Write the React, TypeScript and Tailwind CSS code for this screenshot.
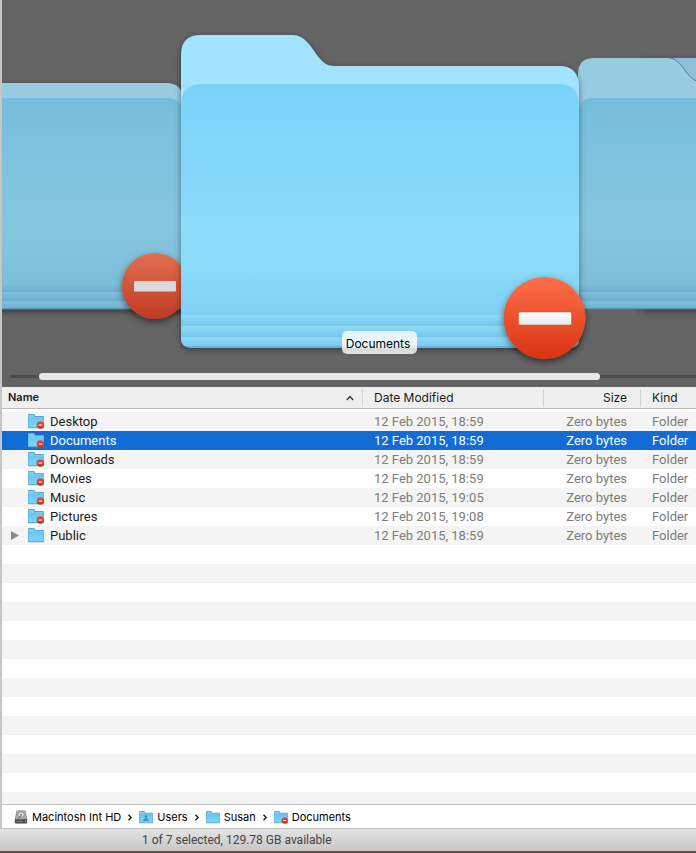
import { useState } from "react";

const files = [
  { name: "Desktop", date: "12 Feb 2015, 18:59", locked: true },
  { name: "Documents", date: "12 Feb 2015, 18:59", locked: true },
  { name: "Downloads", date: "12 Feb 2015, 18:59", locked: true },
  { name: "Movies", date: "12 Feb 2015, 18:59", locked: true },
  { name: "Music", date: "12 Feb 2015, 19:05", locked: true },
  { name: "Pictures", date: "12 Feb 2015, 19:08", locked: true },
  { name: "Public", date: "12 Feb 2015, 18:59", locked: false },
];

function FolderIcon({ locked = false, person = false, small = false }: { locked?: boolean; person?: boolean; small?: boolean }) {
  return (
    <svg viewBox="0 0 16 15" className={small ? "h-[13px] w-3.5 shrink-0" : "h-[15px] w-4 shrink-0"} aria-hidden="true">
      <path d="M0 1Q0 0 1 0H5.6Q6.4 0 6.7 .8L7.200 2H15.2Q16 2 16 2.8V13.6Q16 14.200 15.4 14.200H.6Q0 14.200 0 13.6Z" fill="#58a6cf" />
      <path d="M.6 1H5.8L6.6 3H15.4V4H.6Z" fill="#86cbec" />
      <path d="M.5 3.8H15.5V13.200H.5Z" fill="url(#miniFront)" />
      {person && (
        <path d="M8 4.6a1.7 1.9 0 0 1 .9 3.5v.7q2.6.5 2.8 2.6H4.3q.2-2.1 2.8-2.6v-.7A1.7 1.9 0 0 1 8 4.6Z" fill="#3c94c4" />
      )}
      {locked && (
        <>
          <circle cx="12.4" cy="11" r="3.7" fill="url(#badgeSmall)" />
          <rect x="10.6" y="10.5" width="3.6" height="1.1" fill="#fff" />
        </>
      )}
    </svg>
  );
}

function DriveIcon() {
  return (
    <svg viewBox="0 0 14 14" className="size-[14px] shrink-0" aria-hidden="true">
      <path d="M2.6.6H11.4L13.2 9.4V12.6Q13.2 13.4 12.4 13.4H1.6Q.8 13.4 .8 12.6V9.4Z" fill="#7d7d7d" />
      <path d="M3 1H11L12.4 9H1.6Z" fill="#a9a9a9" />
      <ellipse cx="7" cy="4.6" rx="3.2" ry="2.8" fill="#dedede" stroke="#777" strokeWidth=".6" />
      <circle cx="7" cy="4.6" r=".9" fill="#777" />
      <path d="M7.4 5.4 4.4 8.6" stroke="#555" strokeWidth=".9" />
      <rect x="1" y="9.4" width="12" height="3.8" rx=".6" fill="#4a4a4a" />
      <path d="M2.4 11.4H9" stroke="#8b8b8b" strokeWidth=".9" />
      <circle cx="11.4" cy="11.4" r=".6" fill="#d5d5d5" />
    </svg>
  );
}

function CoverFlow() {
  return (
    <svg viewBox="2 0 694 366" preserveAspectRatio="xMidYMid slice" className="block w-full" role="img" aria-label="Documents folder preview">
      <defs>
        <linearGradient id="front" x1="0" y1="0" x2="0" y2="1">
          <stop offset="0" stopColor="#79d2f8" />
          <stop offset=".6" stopColor="#8bdbfa" />
          <stop offset=".8" stopColor="#8bdafa" />
          <stop offset="1" stopColor="#80d0f2" />
        </linearGradient>
        <linearGradient id="frontDim" x1="0" y1="0" x2="0" y2="1">
          <stop offset="0" stopColor="#76bedb" />
          <stop offset=".6" stopColor="#86c6df" />
          <stop offset="1" stopColor="#79b9d4" />
        </linearGradient>
        <linearGradient id="band" x1="0" y1="0" x2="0" y2="1">
          <stop offset="0" stopColor="#8fd9f6" />
          <stop offset="1" stopColor="#74c8ed" />
        </linearGradient>
        <linearGradient id="bandDim" x1="0" y1="0" x2="0" y2="1">
          <stop offset="0" stopColor="#84bfd8" />
          <stop offset="1" stopColor="#69afcf" />
        </linearGradient>
        <linearGradient id="miniFront" x1="0" y1="0" x2="0" y2="1">
          <stop offset="0" stopColor="#67c5f3" />
          <stop offset="1" stopColor="#82d4f8" />
        </linearGradient>
        <linearGradient id="badgeRed" x1="0" y1="0" x2="0" y2="1">
          <stop offset="0" stopColor="#ff7048" />
          <stop offset="1" stopColor="#d93414" />
        </linearGradient>
        <linearGradient id="badgeSmall" x1="0" y1="0" x2="0" y2="1">
          <stop offset="0" stopColor="#ee4a30" />
          <stop offset="1" stopColor="#cf2c14" />
        </linearGradient>
        <linearGradient id="badgeDim" x1="0" y1="0" x2="0" y2="1">
          <stop offset="0" stopColor="#e27050" />
          <stop offset="1" stopColor="#c13a22" />
        </linearGradient>
        <linearGradient id="bar" x1="0" y1="0" x2="0" y2="1">
          <stop offset="0" stopColor="#fff" />
          <stop offset="1" stopColor="#e6e8ea" />
        </linearGradient>
        <filter id="shadow" x="-10%" y="-10%" width="120%" height="120%">
          <feDropShadow dx="0" dy="2" stdDeviation="3" floodColor="#000" floodOpacity=".45" />
        </filter>
        <filter id="badgeShadow" x="-20%" y="-20%" width="140%" height="150%">
          <feDropShadow dx="0" dy="3" stdDeviation="3.5" floodColor="#000" floodOpacity=".5" />
        </filter>
        <clipPath id="mainFront">
          <path d="M181 104Q182 84 202 84H559Q578 84 579 104V339Q579 347.500 570 347.500H191Q181 347.500 181 338Z" />
        </clipPath>
      </defs>

      {/* previous folder */}
      <g filter="url(#shadow)">
        <path d="M-20 83H168Q181 84 184 98V309H-20Z" fill="#98cbe1" />
        <path d="M-20 98H168Q181 99 184 112V309H-20Z" fill="url(#frontDim)" />
        <rect x="-20" y="283" width="204" height="9" fill="url(#bandDim)" />
        <rect x="-20" y="292" width="204" height="9" fill="url(#bandDim)" />
        <rect x="-20" y="301" width="204" height="8" fill="url(#bandDim)" />
        <rect x="-20" y="308.500" width="204" height="1" fill="#477e98" />
      </g>
      <circle cx="155" cy="286" r="33" fill="url(#badgeDim)" filter="url(#badgeShadow)" />
      <rect x="134" y="281" width="42" height="10.500" rx="1" fill="#d8dadc" />

      {/* next folders */}
      <path d="M640 58H720V309H640Z" fill="#8fc0d6" filter="url(#shadow)" />
      <g>
        <path d="M578 74Q578 58 594 58H669C683 58 686 82 702 82H720V309H578Z" fill="#98cbe1" />
        <path d="M578 113Q579 98 594 98H720V309H578Z" fill="url(#frontDim)" />
        <rect x="578" y="283" width="142" height="9" fill="url(#bandDim)" />
        <rect x="578" y="292" width="142" height="9" fill="url(#bandDim)" />
        <rect x="578" y="301" width="142" height="8" fill="url(#bandDim)" />
        <rect x="578" y="308.500" width="142" height="1" fill="#477e98" />
      </g>
      <path d="M669 58C683 58 686 82 702 82" fill="none" stroke="#557f93" strokeWidth="1" />

      {/* selected folder */}
      <path
        d="M181 55Q181 35 201 35H292C313 35 315 66 334 66H559Q579 66 579 87V339Q579 347.500 570 347.500H191Q181 347.500 181 338Z"
        fill="#a2e3ff"
        filter="url(#shadow)"
      />
      <g clipPath="url(#mainFront)">
        <rect x="181" y="84" width="398" height="231" fill="url(#front)" />
        <rect x="181" y="315" width="398" height="11" fill="url(#band)" />
        <rect x="181" y="326" width="398" height="11" fill="url(#band)" />
        <rect x="181" y="337" width="398" height="11" fill="url(#band)" />
        <rect x="181" y="346.500" width="398" height="1" fill="#4b9cc3" />
      </g>
      <circle cx="544.500" cy="318" r="41" fill="url(#badgeRed)" filter="url(#badgeShadow)" />
      <rect x="518.500" y="312" width="53" height="13" rx="1.500" fill="url(#bar)" stroke="#d94a2a" strokeWidth=".5" />

      <rect x="342" y="331" width="75" height="23" rx="5" fill="#fff" fillOpacity=".8" />
      <text x="378" y="348" textAnchor="middle" className="fill-black text-[12px]">Documents</text>
    </svg>
  );
}

const head = "relative h-[22px] border-b border-[#bdbdbd] p-0 font-normal";
const divider = <span className="absolute left-0 top-0.5 h-[18px] w-px bg-[#d2d2d2]" />;

export default function App() {
  const [selected, setSelected] = useState("Documents");

  return (
    <main className="flex h-screen flex-col overflow-hidden font-['Inter','Liberation_Sans',sans-serif] text-[12px] text-[#1c1c1c]">
      <div className="flex min-h-0 flex-1 flex-col border-l-2 border-[#c6c6c6] bg-white">
        <section className="shrink-0 bg-[#646464]">
          <CoverFlow />
          <div className="flex h-[21px] items-center pl-2">
            <input
              type="range"
              aria-label="Scroll folders"
              defaultValue={23}
              className="h-[7px] w-full appearance-none bg-[linear-gradient(#4d4d4d,#4d4d4d)] bg-[length:100%_3px] bg-center bg-no-repeat [&::-webkit-slider-thumb]:h-[7px] [&::-webkit-slider-thumb]:w-[561px] [&::-webkit-slider-thumb]:appearance-none [&::-webkit-slider-thumb]:rounded-full [&::-webkit-slider-thumb]:bg-[#e8e8e8]"
            />
          </div>
        </section>

        <table className="w-full shrink-0 table-fixed border-separate border-spacing-0">
          <colgroup>
            <col />
            <col className="w-[181px]" />
            <col className="w-[97px]" />
            <col className="w-[56px]" />
          </colgroup>
          <thead className="bg-[#efefef]">
            <tr>
              <th className={`${head} text-left`}>
                <button className="flex w-full items-center justify-between pl-1.5 pr-2">
                  <span className="text-[11px] font-semibold">Name</span>
                  <svg viewBox="0 0 8 6" className="h-1.5 w-2" aria-hidden="true">
                    <path d="M.8 5 4 1.500 7.200 5" fill="none" stroke="#333" strokeWidth="1.300" />
                  </svg>
                </button>
              </th>
              <th className={`${head} text-left`}>
                {divider}
                <button className="pl-3">Date Modified</button>
              </th>
              <th className={`${head} text-right`}>
                {divider}
                <button className="pr-[13px]">Size</button>
              </th>
              <th className={`${head} text-left`}>
                {divider}
                <button className="pl-3">Kind</button>
              </th>
            </tr>
            <tr className="h-[3px] bg-white" aria-hidden="true">
              <td colSpan={4} className="p-0" />
            </tr>
          </thead>
          <tbody className="font-['Roboto','Liberation_Sans',sans-serif] text-[13px] leading-[19px]">
            {files.map((file) => {
              const active = file.name === selected;
              return (
                <tr
                  key={file.name}
                  onClick={() => setSelected(file.name)}
                  className={`h-[19px] whitespace-nowrap ${active ? "bg-[#116cd6] text-white" : "text-[#7c7c7c] odd:bg-[#f4f4f4]"}`}
                >
                  <td className="p-0">
                    <div className="flex h-[19px] items-center">
                      <span className="flex w-[26px] justify-center">
                        {!file.locked && (
                          <button aria-label={`Expand ${file.name}`}>
                            <svg viewBox="0 0 8 9" className="h-[9px] w-2">
                              <path d="M0 0 8 4.500 0 9Z" fill="#8a8a8a" />
                            </svg>
                          </button>
                        )}
                      </span>
                      <FolderIcon locked={file.locked} />
                      <span className={`pl-1.5 ${active ? "" : "text-[#1c1c1c]"}`}>{file.name}</span>
                    </div>
                  </td>
                  <td className="p-0 pl-3">{file.date}</td>
                  <td className="p-0 pr-[13px] text-right">Zero bytes</td>
                  <td className="p-0 pl-3">Folder</td>
                </tr>
              );
            })}
          </tbody>
        </table>
        <div className="min-h-0 flex-1 bg-[repeating-linear-gradient(#fff_0_19px,#f4f4f4_19px_38px)]" />

        <nav aria-label="Path" className="flex h-[25px] shrink-0 items-center border-y border-[#c4c4c4] bg-white pl-3 pt-px text-[11px] text-black">
          <DriveIcon />
          <a href="#hd" className="ml-1">Macintosh Int HD</a>
          <Chevron />
          <FolderIcon small person />
          <a href="#users" className="ml-1">Users</a>
          <Chevron />
          <FolderIcon small />
          <a href="#susan" className="ml-1">Susan</a>
          <Chevron />
          <FolderIcon small locked />
          <a href="#documents" className="ml-1">Documents</a>
        </nav>
      </div>
      <footer className="h-[24px] shrink-0 border-b-2 border-[#5d5340] bg-linear-to-b from-[#e4e4e4] to-[#c6c6c6] pl-[142px] font-['Roboto','Liberation_Sans',sans-serif] leading-[23px] text-[#444]">
        1 of 7 selected, 129.78 GB available
      </footer>
    </main>
  );
}

function Chevron() {
  return (
    <svg viewBox="0 0 4 7" className="mx-[7px] h-[7px] w-1 shrink-0" aria-hidden="true">
      <path d="M.5 .8 3.200 3.500 .5 6.200" fill="none" stroke="#111" strokeWidth="1.300" />
    </svg>
  );
}
